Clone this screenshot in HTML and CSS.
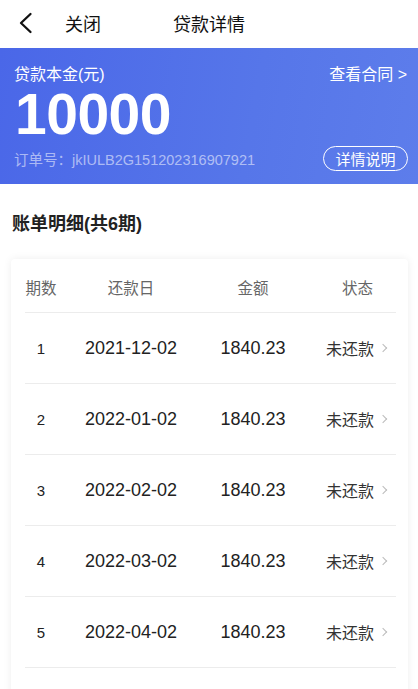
FILE: index.html
```html
<!DOCTYPE html>
<html lang="zh-CN">
<head>
<meta charset="utf-8">
<title>贷款详情</title>
<link rel="stylesheet" href="styles.css">
</head>
<body>
<header class="nav">
  <div class="nav-left">
    <svg class="back" width="14" height="22" viewBox="0 0 14 22"><polyline points="11.5,2 2,11 11.5,20" fill="none" stroke="#111" stroke-width="2.3" stroke-linecap="round" stroke-linejoin="round"/></svg>
    <span class="close">关闭</span>
  </div>
  <div class="nav-title">贷款详情</div>
  <div></div>
</header>

<section class="banner">
  <div class="banner-row">
    <span class="label">贷款本金(元)</span>
    <span class="contract">查看合同 &gt;</span>
  </div>
  <div class="amount">10000</div>
  <div class="banner-row bottom">
    <span class="order">订单号：jkIULB2G151202316907921</span>
    <span class="detail-btn">详情说明</span>
  </div>
</section>

<h2 class="section-title">账单明细(共6期)</h2>

<div class="card">
  <div class="row head">
    <span class="c1">期数</span>
    <span class="c2">还款日</span>
    <span class="c3">金额</span>
    <span class="c4">状态</span>
  </div>
  <div class="row">
    <span class="c1 num">1</span>
    <span class="c2">2021-12-02</span>
    <span class="c3">1840.23</span>
    <span class="c4 status">未还款<i class="arrow"></i></span>
  </div>
  <div class="row">
    <span class="c1 num">2</span>
    <span class="c2">2022-01-02</span>
    <span class="c3">1840.23</span>
    <span class="c4 status">未还款<i class="arrow"></i></span>
  </div>
  <div class="row">
    <span class="c1 num">3</span>
    <span class="c2">2022-02-02</span>
    <span class="c3">1840.23</span>
    <span class="c4 status">未还款<i class="arrow"></i></span>
  </div>
  <div class="row">
    <span class="c1 num">4</span>
    <span class="c2">2022-03-02</span>
    <span class="c3">1840.23</span>
    <span class="c4 status">未还款<i class="arrow"></i></span>
  </div>
  <div class="row">
    <span class="c1 num">5</span>
    <span class="c2">2022-04-02</span>
    <span class="c3">1840.23</span>
    <span class="c4 status">未还款<i class="arrow"></i></span>
  </div>
  <div class="row">
    <span class="c1 num">6</span>
    <span class="c2">2022-05-02</span>
    <span class="c3">1840.23</span>
    <span class="c4 status">未还款<i class="arrow"></i></span>
  </div>
</div>
</body>
</html>
```

FILE: styles.css
```css
* { box-sizing: border-box; }
body {
  margin: 0;
  background: #fff;
  font-family: "Liberation Sans", "Noto Sans CJK SC", sans-serif;
  color: #222;
}
.nav {
  height: 48px;
  display: grid;
  grid-template-columns: 1fr auto 1fr;
  align-items: center;
  font-size: 18px;
  color: #111;
}
.nav-left {
  display: flex;
  align-items: center;
  padding-left: 19px;
}
.back { display: block; margin-top: -2px; }
.close { margin-left: 32px; margin-top: -3px; }
.nav-title { margin-top: -3px; }

.banner {
  height: 136px;
  background: linear-gradient(100deg, #4a67e8 0%, #5676e9 60%, #5d7deb 100%);
  color: #fff;
  padding: 16px 11px 0 14px;
  display: flex;
  flex-direction: column;
}
.banner-row {
  display: flex;
  justify-content: space-between;
  align-items: center;
}
.label, .contract { font-size: 16px; line-height: 22px; }
.amount {
  font-size: 57px;
  font-weight: bold;
  line-height: 52px;
  margin-top: 2px;
  margin-left: 1px;
  letter-spacing: -0.5px;
}
.bottom { margin-top: 6px; }
.order {
  font-size: 14.5px;
  color: rgba(255,255,255,0.55);
}
.detail-btn {
  border: 1px solid #fff;
  border-radius: 13px;
  height: 25px;
  width: 85px;
  font-size: 15px;
  display: flex;
  align-items: center;
  justify-content: center;
  margin-right: -1px;
}

.section-title {
  margin: 0;
  padding: 29px 12px 0;
  font-size: 18px;
  font-weight: bold;
  line-height: 22px;
  color: #222;
}

.card {
  margin: 24px 10px 0 11px;
  background: #fff;
  border-radius: 4px;
  box-shadow: 0 0 8px rgba(0,0,0,0.07);
  padding: 0 12px 0 14px;
}
.row {
  display: grid;
  grid-template-columns: 32px 148px 114px 1fr;
  align-items: center;
  height: 71px;
  border-bottom: 1px solid #ececec;
  font-size: 18px;
  color: #222;
  text-align: center;
}
.row.head {
  height: 54px;
  font-size: 15.5px;
  color: #666;
  padding-top: 2px;
}
.c3 { padding-right: 18px; }
.num { font-size: 15px; }
.status {
  font-size: 16px;
  color: #333;
  display: flex;
  align-items: center;
  justify-content: center;
  padding-right: 3px;
}
.arrow {
  display: inline-block;
  width: 6px;
  height: 6px;
  border-top: 1px solid #bbb;
  border-right: 1px solid #bbb;
  transform: rotate(45deg);
  margin-left: 6px;
}
```
